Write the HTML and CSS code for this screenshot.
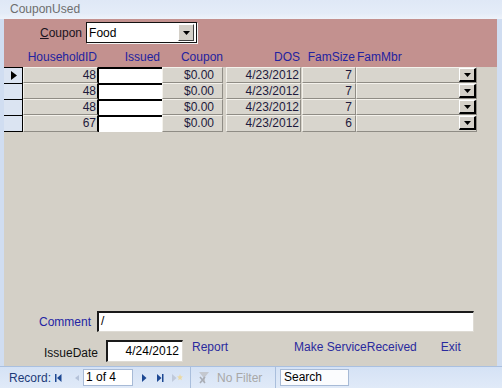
FILE: index.html
```html
<!DOCTYPE html>
<html lang="en">
<head>
  <meta charset="UTF-8">
  <title>CouponUsed</title>
  <link rel="stylesheet" href="styles.css">
</head>
<body>
  <div class="window">
    <div class="titlebar">CouponUsed</div>

    <div class="form">
      <div class="form-header">
        <div class="coupon-pick">
          <span class="coupon-label"><u>C</u>oupon</span>
          <div class="combo">
            <span class="combo-text">Food</span>
            <span class="drop-btn">
              <svg width="7" height="4" viewBox="0 0 7 4"><path d="M0 0h7L3.5 4z" fill="#000"/></svg>
            </span>
          </div>
        </div>
        <div class="grid col-labels">
          <span></span>
          <span class="lbl">HouseholdID</span>
          <span class="lbl lbl-issued">Issued</span>
          <span class="lbl">Coupon</span>
          <span class="lbl">DOS</span>
          <span class="lbl">FamSize</span>
          <span class="lbl lbl-left">FamMbr</span>
        </div>
      </div>

      <div class="detail">
        <div class="rows" id="rows"></div>

        <div class="spacer"></div>

        <div class="footer">
          <div class="footer-row comment-row">
            <span class="flabel comment-label">Comment</span>
            <div class="textbox comment-box">/</div>
          </div>
          <div class="footer-row issue-row">
            <span class="flabel issue-label">IssueDate</span>
            <div class="textbox issue-box">4/24/2012</div>
            <span class="link link-report">Report</span>
            <span class="link link-make">Make ServiceReceived</span>
            <span class="link link-exit">Exit</span>
          </div>
        </div>
      </div>
    </div>

    <div class="navbar">
      <span class="nav-label">Record:</span>
      <svg class="nav-ico" width="12" height="10" viewBox="0 0 12 10"><rect x="2" y="1" width="1.5" height="8" fill="#1d4893"/><path d="M8.5 1v8L4 5z" fill="#1d4893"/></svg>
      <svg class="nav-ico" width="16" height="10" viewBox="0 0 16 10"><path d="M14 2v6L10 5z" fill="#b4c2d9"/></svg>
      <div class="nav-box">1 of 4</div>
      <svg class="nav-ico" width="18" height="10" viewBox="0 0 18 10"><path d="M9 1v8l4.5-4z" fill="#1d4893"/></svg>
      <svg class="nav-ico" width="15" height="10" viewBox="0 0 15 10"><path d="M6 1v8l4.5-4z" fill="#1d4893"/><rect x="11" y="1" width="1.5" height="8" fill="#1d4893"/></svg>
      <svg class="nav-ico" width="20" height="10" viewBox="0 0 20 10"><path d="M6 1v8l4.5-4z" fill="#c0cadb"/><path d="M14 1l.8 2.2 2.2.3-1.7 1.5.5 2.3-1.8-1.2-1.8 1.2.5-2.3-1.7-1.5 2.2-.3z" fill="#ead9a3"/></svg>
      <span class="nav-sep"></span>
      <svg class="nav-ico filter-ico" width="24" height="14" viewBox="0 0 24 14"><path d="M8 1h10l-4 5v6l-2-1.5V6z" fill="#c4c8cf"/><path d="M9 6l5 6M14 6l-5 6" stroke="#a9adb5" stroke-width="1.6"/></svg>
      <span class="nav-filter">No Filter</span>
      <span class="nav-sep"></span>
      <div class="nav-search">Search</div>
    </div>
  </div>

  <script>
    const records = [
      { hh: 48, coupon: "$0.00", dos: "4/23/2012", fam: 7 },
      { hh: 48, coupon: "$0.00", dos: "4/23/2012", fam: 7 },
      { hh: 48, coupon: "$0.00", dos: "4/23/2012", fam: 7 },
      { hh: 67, coupon: "$0.00", dos: "4/23/2012", fam: 6 }
    ];

    const rows = document.getElementById("rows");
    records.forEach((r, i) => {
      const row = document.createElement("div");
      row.className = "grid row";
      row.innerHTML = `
        <span class="sel">${i === 0 ? '<svg width="6" height="9" viewBox="0 0 6 9"><path d="M0 0l6 4.5L0 9z" fill="#000"/></svg>' : ''}</span>
        <span class="cell num">${r.hh}</span>
        <span class="issued"></span>
        <span class="cell num coupon">${r.coupon}</span>
        <span class="cell num dos">${r.dos}</span>
        <span class="cell num famsize">${r.fam}</span>
        <span class="cell fammbr"><span class="row-drop"><svg width="7" height="4" viewBox="0 0 7 4"><path d="M0 0h7L3.5 4z" fill="#000"/></svg></span></span>
      `;
      rows.appendChild(row);
    });
  </script>
</body>
</html>
```

FILE: styles.css
```css
* {
  box-sizing: border-box;
}
body {
  margin: 0;
  font-family: "Liberation Sans", Arial, sans-serif;
  font-size: 12px;
}
.window {
  width: 502px;
  height: 388px;
  display: flex;
  flex-direction: column;
  background: #d0ddf1;
  overflow: hidden;
}
.titlebar {
  height: 19px;
  padding: 3px 0 0 10px;
  line-height: 13px;
  color: #6e6e6e;
  background: linear-gradient(#dfe8f6, #e4ecf8 70%, #eef3fb);
}
.form {
  flex: 1;
  margin: 0 5px 0 4px;
  display: flex;
  flex-direction: column;
}

/* header */
.form-header {
  height: 48px;
  background: #c3918f;
  padding-top: 3px;
}
.coupon-pick {
  display: flex;
  align-items: center;
  height: 21px;
  padding-left: 36px;
}
.coupon-label {
  color: #1a1420;
}
.combo {
  margin-left: 4px;
  width: 111px;
  height: 21px;
  display: flex;
  align-items: center;
  background: #fff;
  border: 1px solid #111;
  box-shadow: 1px 1px 0 #f4f4f4;
}
.combo-text {
  flex: 1;
  padding-left: 2px;
  color: #000;
}
.drop-btn {
  width: 16px;
  height: 17px;
  margin-right: 2px;
  display: flex;
  align-items: center;
  justify-content: center;
  background: #d4d0c8;
  border-top: 1px solid #fff;
  border-left: 1px solid #fff;
  border-right: 1px solid #404040;
  border-bottom: 1px solid #404040;
}
.grid {
  display: grid;
  grid-template-columns: 19px 75px 64px 62px 77px 55px 121px;
}
.col-labels {
  margin-top: 6px;
  line-height: 16px;
  color: #2222a0;
}
.lbl {
  text-align: right;
  padding-right: 1px;
}
.lbl-issued {
  padding-right: 2px;
}
.lbl-left {
  text-align: left;
  padding: 0 0 0 1px;
}

/* detail */
.detail {
  flex: 1;
  display: flex;
  flex-direction: column;
  background: #d4d0c7;
}
.row {
  height: 16px;
  line-height: 14px;
  color: #1e1a3c;
}
.sel {
  display: flex;
  align-items: center;
  padding-left: 7px;
  background: #dbe4f2;
  border-top: 1px solid #000;
  border-right: 1px solid #000;
}
.row:last-child .sel {
  border-bottom: 1px solid #000;
  height: 17px;
}
.cell {
  background: #d8d5cd;
  border-top: 1px solid #f4f2ec;
  border-left: 1px solid #f4f2ec;
  border-bottom: 1px solid #8f8c85;
  border-right: 1px solid #8f8c85;
}
.num {
  text-align: right;
  padding-right: 1px;
}
.row .cell:nth-child(2) {
  border-right-color: #000;
}
.issued {
  background: #fff;
  border-top: 2px solid #000;
  border-left: 1px solid #000;
}
.coupon {
  margin-right: 1px;
  padding-right: 8px;
}
.dos {
  margin-left: 2px;
}
.famsize {
  margin-left: 1px;
  padding-right: 3px;
}
.fammbr {
  display: flex;
  justify-content: flex-end;
  padding-right: 0;
}
.row-drop {
  width: 17px;
  height: 14px;
  display: flex;
  align-items: center;
  justify-content: center;
  background: #d4d0c8;
  border-top: 1px solid #fff;
  border-left: 1px solid #fff;
  border-right: 2px solid #000;
  border-bottom: 2px solid #000;
}
.spacer {
  flex: 1;
}

/* footer */
.footer {
  padding-bottom: 4px;
}
.footer-row {
  display: flex;
  align-items: center;
}
.comment-row {
  height: 21px;
}
.issue-row {
  height: 22px;
  margin-top: 8px;
}
.flabel {
  text-align: right;
}
.comment-label {
  width: 87px;
  color: #2424a4;
}
.issue-label {
  width: 94px;
  color: #111;
  padding-top: 3px;
}
.textbox {
  height: 100%;
  background: #fff;
  color: #000;
  line-height: 17px;
  border-top: 2px solid #1a1a1a;
  border-left: 2px solid #1a1a1a;
  border-right: 1px solid #dedbd4;
  border-bottom: 1px solid #dedbd4;
}
.comment-box {
  margin-left: 6px;
  width: 377px;
  padding-left: 2px;
}
.issue-box {
  margin-left: 8px;
  width: 77px;
  text-align: right;
  padding-right: 3px;
  line-height: 18px;
}
.link {
  color: #2a2a9e;
  align-self: flex-start;
  margin-top: 0;
}
.link-report {
  margin-left: 9px;
}
.link-make {
  margin-left: 66px;
}
.link-exit {
  margin-left: 24px;
}

/* navigation bar */
.navbar {
  height: 22px;
  display: flex;
  align-items: center;
  padding-left: 9px;
  background: linear-gradient(#d5e2f5, #e0eaf8);
  border-top: 1px solid #aac0e0;
}
.nav-label {
  width: 44px;
  color: #1c3a78;
}
.nav-ico {
  flex: none;
}
.nav-box {
  margin-left: 2px;
  width: 50px;
  height: 17px;
  line-height: 15px;
  padding-left: 2px;
  background: #fff;
  border: 1px solid #a7bad6;
  color: #000;
}
.nav-sep {
  width: 1px;
  height: 21px;
  margin-left: 4px;
  background: #a9bedc;
}
.filter-ico {
  margin-left: 0;
}
.nav-filter {
  width: 54px;
  margin-left: 2px;
  color: #a8a8a8;
}
.nav-search {
  margin-left: 4px;
  width: 69px;
  height: 17px;
  line-height: 15px;
  padding-left: 3px;
  background: #fbfcfe;
  border: 1px solid #a7bad6;
  color: #000;
}
```
